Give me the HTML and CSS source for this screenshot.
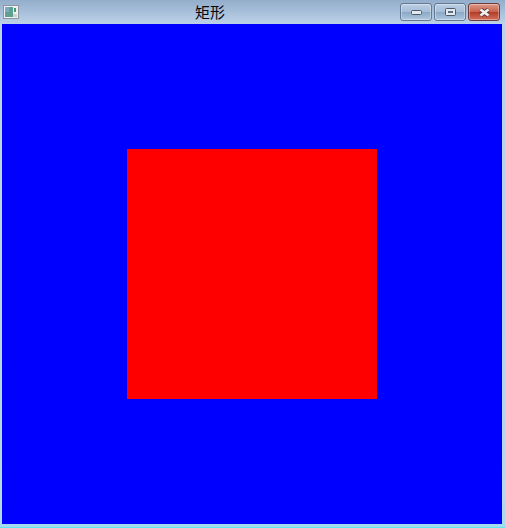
FILE: index.html
```html
<!DOCTYPE html>
<html lang="zh-CN">

<head>
    <meta charset="UTF-8">
    <meta name="viewport" content="width=device-width, initial-scale=1.0">
    <title>矩形</title>
    <link rel="stylesheet" href="styles.css">
</head>

<body>
    <div class="window">
        <div class="titlebar">
            <svg class="appicon" viewBox="0 0 16 14" width="16" height="14">
                <rect x="0.5" y="0.5" width="15" height="13" fill="#eef1f3" stroke="#8f959c"/>
                <rect x="2" y="2" width="8" height="10" fill="#5fa08e"/>
                <rect x="2" y="2" width="4" height="5" fill="#7fa8c4"/>
                <rect x="11" y="3" width="2" height="4" fill="#3f9a78"/>
                <rect x="10" y="9" width="4" height="3" fill="#cdd1d4"/>
            </svg>
            <span class="title">矩形</span>
            <div class="controls">
                <div class="btn">
                    <svg viewBox="0 0 11 5" width="11" height="5"><rect x="0.5" y="0.5" width="10" height="4" rx="1" fill="#e4e9ee" stroke="#4a5a6c"/></svg>
                </div>
                <div class="btn">
                    <svg viewBox="0 0 11 8" width="11" height="8"><rect x="0.5" y="0.5" width="10" height="7" rx="1" fill="#e4e9ee" stroke="#4a5a6c"/><rect x="3" y="3" width="5" height="2" fill="#5a6c80"/></svg>
                </div>
                <div class="btn close">
                    <svg viewBox="0 0 13 9" width="13" height="9"><path d="M2.5 1.5 L10.5 7.5 M10.5 1.5 L2.5 7.5" stroke="#5a3330" stroke-width="4.2"/><path d="M2.5 1.5 L10.5 7.5 M10.5 1.5 L2.5 7.5" stroke="#f0f0f0" stroke-width="2.8"/></svg>
                </div>
            </div>
        </div>
        <div class="canvas">
            <div class="rect"></div>
        </div>
    </div>
</body>

</html>
```

FILE: styles.css
```css
* {
    margin: 0;
    padding: 0;
    box-sizing: border-box;
}

body {
    width: 505px;
    height: 528px;
    overflow: hidden;
    font-family: "Noto Sans CJK SC", "Liberation Sans", sans-serif;
}

.window {
    width: 505px;
    height: 528px;
    padding: 0 3px 3px 2px;
    background: linear-gradient(to bottom, #a9c0d9 0, #bcd3e8 24px, #b5d8ea 500px, #a5dcee 100%);
    border-bottom: 1px solid #5fe6f2;
}

.titlebar {
    display: flex;
    align-items: flex-start;
    height: 24px;
    background: linear-gradient(to bottom, #93aecb, #bcd2e8);
    margin: 0 -3px 0 -2px;
    padding: 0 5px 0 3px;
}

.appicon {
    flex: none;
    margin-top: 5px;
}

.title {
    margin-left: 176px;
    margin-top: 2px;
    font-size: 15px;
    line-height: 20px;
    color: #05050c;
}

/* 窗口按钮 */
.controls {
    display: flex;
    gap: 2px;
    margin-left: auto;
    margin-top: 3px;
}

.btn {
    display: flex;
    justify-content: center;
    align-items: center;
    width: 32px;
    height: 18px;
    border: 1px solid #647a94;
    border-radius: 3px;
    background: linear-gradient(to bottom, #bccfe3 0, #a5bdd8 50%, #8aa7c6 51%, #b0c8de 100%);
    box-shadow: inset 0 0 0 1px rgba(255, 255, 255, 0.35);
}

.close {
    border-color: #6e3a3a;
    background: linear-gradient(to bottom, #dc9a88 0, #c8604c 50%, #b23a28 51%, #d0705c 100%);
}

.canvas {
    display: flex;
    justify-content: center;
    align-items: center;
    width: 500px;
    height: 500px;
    background: #0000ff;
}

.rect {
    width: 250px;
    height: 250px;
    background: #ff0000;
}
```
